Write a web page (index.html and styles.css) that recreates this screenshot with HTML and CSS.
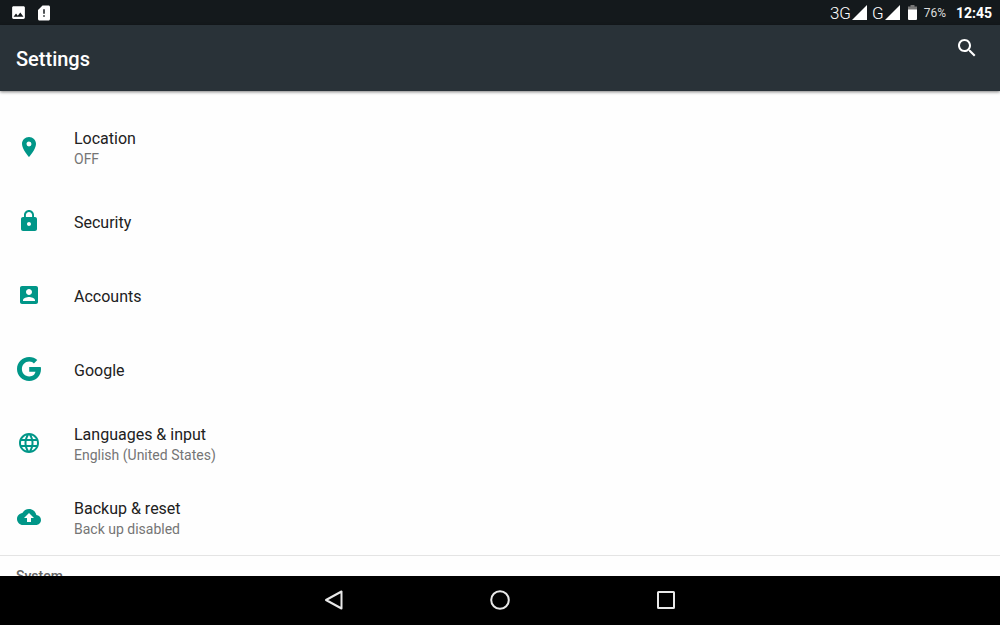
FILE: index.html
```html
<!DOCTYPE html>
<html lang="en">
<head>
    <meta charset="UTF-8">
    <meta name="viewport" content="width=device-width, initial-scale=1.0">
    <title>Settings</title>
    <link rel="stylesheet" href="styles.css">
</head>
<body>

    <div class="status-bar">
        <div class="notifications">
            <svg width="17" height="17" viewBox="0 0 24 24"><path d="M21 19V5c0-1.100-.9-2-2-2H5c-1.100 0-2 .9-2 2v14c0 1.100.9 2 2 2h14c1.100 0 2-.9 2-2zM8.500 13.500l2.500 3 3.500-4.500 4.500 6H5l3.500-4.500z"/></svg>
            <svg width="18" height="18" viewBox="0 0 24 24"><path d="M18 2h-8L4 8v12c0 1.100.9 2 2 2h12c1.100 0 2-.9 2-2V4c0-1.100-.9-2-2-2zm-5 15h-2v-2h2v2zm0-4h-2V7h2v6z"/></svg>
        </div>
        <div class="indicators">
            <span class="network">3G</span>
            <svg class="signal" width="15" height="15" viewBox="0 0 15 15"><path d="M15 0v15H0z"/></svg>
            <span class="network">G</span>
            <svg class="signal" width="15" height="15" viewBox="0 0 15 15"><path d="M15 0v15H0z"/></svg>
            <svg class="battery" width="9" height="15" viewBox="0 0 9 15"><path fill="#777" d="M2.500 0h4v1.500H9V5H0V1.500h2.500z"/><path d="M0 4.500h9V14q0 1-1 1H1q-1 0-1-1z"/></svg>
            <span class="percent">76%</span>
            <span class="clock">12:45</span>
        </div>
    </div>

    <header class="toolbar">
        <h1>Settings</h1>
        <button class="search" aria-label="Search">
            <svg width="24" height="24" viewBox="0 0 24 24"><path d="M15.500 14h-.79l-.28-.27C15.410 12.590 16 11.110 16 9.500 16 5.910 13.090 3 9.500 3S3 5.910 3 9.500 5.910 16 9.500 16c1.610 0 3.090-.59 4.230-1.570l.27.28v.79l5 4.990L20.490 19l-4.990-5zm-6 0C7.010 14 5 11.990 5 9.500S7.010 5 9.500 5 14 7.010 14 9.500 11.990 14 9.500 14z"/></svg>
        </button>
    </header>

    <main class="content">
        <ul class="settings-list">
            <li>
                <a class="item" href="#location">
                    <svg width="24" height="24" viewBox="0 0 24 24"><path d="M12 2C8.130 2 5 5.130 5 9c0 5.250 7 13 7 13s7-7.750 7-13c0-3.870-3.130-7-7-7zm0 9.500a2.500 2.500 0 0 1 0-5 2.500 2.500 0 0 1 0 5z"/></svg>
                    <span class="text">
                        <span class="title">Location</span>
                        <span class="summary">OFF</span>
                    </span>
                </a>
            </li>
            <li>
                <a class="item" href="#security">
                    <svg width="24" height="24" viewBox="0 0 24 24"><path d="M18 8h-1V6c0-2.760-2.240-5-5-5S7 3.240 7 6v2H6c-1.100 0-2 .9-2 2v10c0 1.100.9 2 2 2h12c1.100 0 2-.9 2-2V10c0-1.100-.9-2-2-2zm-6 9c-1.100 0-2-.9-2-2s.9-2 2-2 2 .9 2 2-.9 2-2 2zm3.100-9H8.900V6c0-1.710 1.390-3.100 3.100-3.100s3.100 1.390 3.100 3.100v2z"/></svg>
                    <span class="text"><span class="title">Security</span></span>
                </a>
            </li>
            <li>
                <a class="item" href="#accounts">
                    <svg width="24" height="24" viewBox="0 0 24 24"><path d="M3 5v14c0 1.100.89 2 2 2h14c1.100 0 2-.9 2-2V5c0-1.100-.9-2-2-2H5c-1.110 0-2 .9-2 2zm12 4c0 1.660-1.340 3-3 3s-3-1.340-3-3 1.340-3 3-3 3 1.340 3 3zm-9 8c0-2 4-3.100 6-3.100s6 1.100 6 3.100v1H6v-1z"/></svg>
                    <span class="text"><span class="title">Accounts</span></span>
                </a>
            </li>
            <li>
                <a class="item" href="#google">
                    <svg width="24" height="24" viewBox="0 0 24 24"><path d="M12.200 9.900h11.500c.2.700.3 1.400.3 2.200C24 19 19.200 24 12.200 24 5.500 24 0 18.600 0 12S5.500 0 12.200 0c3.300 0 6 1.200 8.100 3.100L16.900 6.500c-.9-.9-2.500-1.900-4.700-1.900-4.100 0-7.300 3.300-7.300 7.400s3.200 7.400 7.300 7.400c4.100 0 5.800-2.600 6.300-4.700h-6.300z"/></svg>
                    <span class="text"><span class="title">Google</span></span>
                </a>
            </li>
            <li>
                <a class="item" href="#language">
                    <svg width="24" height="24" viewBox="0 0 24 24"><path d="M11.990 2C6.470 2 2 6.480 2 12s4.470 10 9.990 10C17.520 22 22 17.520 22 12S17.520 2 11.990 2zm6.930 6h-2.950c-.32-1.250-.78-2.450-1.380-3.560 1.840.63 3.370 1.910 4.330 3.560zM12 4.040c.83 1.200 1.480 2.530 1.910 3.960h-3.820c.43-1.430 1.080-2.760 1.910-3.960zM4.260 14C4.100 13.360 4 12.690 4 12s.1-1.360.26-2h3.380c-.08.66-.14 1.320-.14 2s.06 1.340.14 2H4.260zm.82 2h2.950c.32 1.250.78 2.450 1.380 3.560-1.840-.63-3.370-1.900-4.330-3.560zm2.950-8H5.080c.96-1.660 2.490-2.930 4.330-3.560C8.810 5.550 8.350 6.750 8.030 8zM12 19.960c-.83-1.200-1.480-2.530-1.910-3.960h3.820c-.43 1.430-1.080 2.760-1.910 3.960zM14.340 14H9.660c-.09-.66-.16-1.320-.16-2s.07-1.350.16-2h4.680c.09.65.16 1.320.16 2s-.07 1.340-.16 2zm.25 5.560c.6-1.110 1.060-2.310 1.380-3.560h2.950c-.96 1.650-2.490 2.930-4.330 3.560zM16.360 14c.08-.66.14-1.320.14-2s-.06-1.340-.14-2h3.380c.16.64.26 1.310.26 2s-.1 1.360-.26 2h-3.380z"/></svg>
                    <span class="text">
                        <span class="title">Languages &amp; input</span>
                        <span class="summary">English (United States)</span>
                    </span>
                </a>
            </li>
            <li>
                <a class="item" href="#backup">
                    <svg width="24" height="24" viewBox="0 0 24 24"><path d="M19.350 10.040C18.670 6.590 15.640 4 12 4 9.110 4 6.600 5.640 5.350 8.040 2.340 8.360 0 10.910 0 14c0 3.310 2.690 6 6 6h13c2.760 0 5-2.240 5-5 0-2.640-2.050-4.780-4.650-4.960zM14 13v4h-4v-4H7l5-5 5 5h-3z"/></svg>
                    <span class="text">
                        <span class="title">Backup &amp; reset</span>
                        <span class="summary">Back up disabled</span>
                    </span>
                </a>
            </li>
        </ul>
        <h2 class="category">System</h2>
    </main>

    <nav class="nav-bar">
        <button aria-label="Back">
            <svg width="22" height="22" viewBox="0 0 22 22"><path d="M18.500 2.500v17L3 11z"/></svg>
        </button>
        <button aria-label="Home">
            <svg width="22" height="22" viewBox="0 0 22 22"><circle cx="11" cy="11" r="8.800"/></svg>
        </button>
        <button aria-label="Recent apps">
            <svg width="22" height="22" viewBox="0 0 22 22"><rect x="3" y="3" width="16" height="16" rx="0.500"/></svg>
        </button>
    </nav>

</body>
</html>
```

FILE: styles.css
```css
body {
    margin: 0;
    height: 100vh;
    display: flex;
    flex-direction: column;
    overflow: hidden;
    font-family: Roboto, sans-serif;
    background: #fefefe;
    color: #212121;
}
svg {
    display: block;
    flex: none;
    fill: currentColor;
}
button {
    display: flex;
    padding: 0;
    border: none;
    background: none;
    color: inherit;
    cursor: pointer;
}
.status-bar {
    flex: none;
    height: 25px;
    display: flex;
    align-items: center;
    justify-content: space-between;
    padding: 0 8px 0 10px;
    background: #14191c;
    color: #fff;
}
.notifications {
    display: flex;
    align-items: center;
    gap: 8px;
}
.indicators {
    display: flex;
    align-items: center;
}
.network {
    font-size: 17px;
    font-weight: 300;
    line-height: 24px;
}
.signal {
    margin: 0 5px 0 1px;
}
.battery {
    margin: 0 7px 0 3px;
}
.percent {
    margin-right: 10px;
    font-size: 12px;
    color: #ddd;
}
.clock {
    font-size: 14px;
    font-weight: 700;
}
.toolbar {
    flex: none;
    height: 66px;
    display: flex;
    align-items: center;
    justify-content: space-between;
    padding: 1px 21px 0 16px;
    box-sizing: border-box;
    background: #293238;
    color: #fff;
    box-shadow: 0 1px 3px rgba(0, 0, 0, 0.5);
}
.toolbar h1 {
    margin: 0;
    font-size: 20px;
    font-weight: 500;
}
.search {
    align-self: flex-start;
    margin-top: 10px;
}
.content {
    flex: 1;
    min-height: 0;
    overflow: hidden;
}
.settings-list {
    margin: 0;
    padding: 19px 0 1px;
    list-style: none;
    border-bottom: 1px solid #e4e4e4;
}
.item {
    height: 74px;
    display: flex;
    align-items: center;
    gap: 33px;
    padding: 0 17px;
    color: #212121;
    text-decoration: none;
}
.item svg {
    color: #009688;
}
.text {
    display: flex;
    flex-direction: column;
    padding-top: 2px;
}
.title {
    font-size: 16px;
    line-height: 21px;
}
.summary {
    font-size: 14px;
    line-height: 20px;
    color: #757575;
}
.category {
    margin: 0;
    padding: 10px 16px;
    font-size: 14px;
    font-weight: 500;
    line-height: 20px;
    color: #666;
}
.nav-bar {
    flex: none;
    height: 49px;
    display: flex;
    align-items: center;
    justify-content: center;
    gap: 144px;
    padding-bottom: 1px;
    box-sizing: border-box;
    background: #000;
    color: #e8e8e8;
}
.nav-bar svg {
    fill: none;
    stroke: currentColor;
    stroke-width: 2;
    stroke-linejoin: round;
}
```
